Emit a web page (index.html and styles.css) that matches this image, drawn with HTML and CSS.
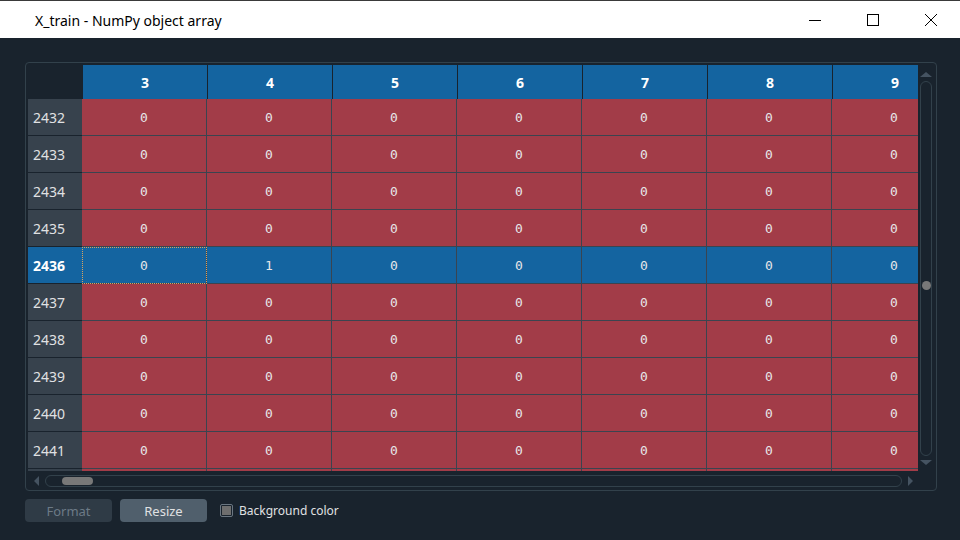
FILE: index.html
```html
<!DOCTYPE html>
<html>
<head>
<meta charset="utf-8">
<title>X_train - NumPy object array</title>
<link rel="stylesheet" href="styles.css">
</head>
<body>
<div class="titlebar">
  <div class="title">X_train - NumPy object array</div>
  <div class="controls">
    <div class="ctl"><svg width="14" height="14" viewBox="0 0 14 14"><path d="M1 7.5h12" stroke="#000" stroke-width="1" fill="none"/></svg></div>
    <div class="ctl"><svg width="14" height="14" viewBox="0 0 14 14"><rect x="1.5" y="1.5" width="11" height="11" stroke="#000" stroke-width="1" fill="none"/></svg></div>
    <div class="ctl"><svg width="14" height="14" viewBox="0 0 14 14"><path d="M1 1L13 13M13 1L1 13" stroke="#000" stroke-width="1" fill="none"/></svg></div>
  </div>
</div>
<div class="main">
  <div class="frame">
    <div class="viewport">
      <div class="hdr">
        <div class="corner"></div>
        <div class="hcell">3</div><div class="hcell">4</div><div class="hcell">5</div><div class="hcell">6</div><div class="hcell">7</div><div class="hcell">8</div><div class="hcell">9</div>
      </div>
      <div class="row"><div class="rh">2432</div><div class="cell">0</div><div class="cell">0</div><div class="cell">0</div><div class="cell">0</div><div class="cell">0</div><div class="cell">0</div><div class="cell">0</div></div>
      <div class="row"><div class="rh">2433</div><div class="cell">0</div><div class="cell">0</div><div class="cell">0</div><div class="cell">0</div><div class="cell">0</div><div class="cell">0</div><div class="cell">0</div></div>
      <div class="row"><div class="rh">2434</div><div class="cell">0</div><div class="cell">0</div><div class="cell">0</div><div class="cell">0</div><div class="cell">0</div><div class="cell">0</div><div class="cell">0</div></div>
      <div class="row"><div class="rh">2435</div><div class="cell">0</div><div class="cell">0</div><div class="cell">0</div><div class="cell">0</div><div class="cell">0</div><div class="cell">0</div><div class="cell">0</div></div>
      <div class="row sel"><div class="rh">2436</div><div class="cell focus">0</div><div class="cell">1</div><div class="cell">0</div><div class="cell">0</div><div class="cell">0</div><div class="cell">0</div><div class="cell">0</div></div>
      <div class="row"><div class="rh">2437</div><div class="cell">0</div><div class="cell">0</div><div class="cell">0</div><div class="cell">0</div><div class="cell">0</div><div class="cell">0</div><div class="cell">0</div></div>
      <div class="row"><div class="rh">2438</div><div class="cell">0</div><div class="cell">0</div><div class="cell">0</div><div class="cell">0</div><div class="cell">0</div><div class="cell">0</div><div class="cell">0</div></div>
      <div class="row"><div class="rh">2439</div><div class="cell">0</div><div class="cell">0</div><div class="cell">0</div><div class="cell">0</div><div class="cell">0</div><div class="cell">0</div><div class="cell">0</div></div>
      <div class="row"><div class="rh">2440</div><div class="cell">0</div><div class="cell">0</div><div class="cell">0</div><div class="cell">0</div><div class="cell">0</div><div class="cell">0</div><div class="cell">0</div></div>
      <div class="row"><div class="rh">2441</div><div class="cell">0</div><div class="cell">0</div><div class="cell">0</div><div class="cell">0</div><div class="cell">0</div><div class="cell">0</div><div class="cell">0</div></div>
      <div class="row"><div class="rh"></div><div class="cell"></div><div class="cell"></div><div class="cell"></div><div class="cell"></div><div class="cell"></div><div class="cell"></div><div class="cell"></div></div>
    </div>
    <div class="vscroll">
      <div class="arrow-up"></div>
      <div class="vtrack"><div class="vhandle"></div></div>
      <div class="arrow-down"></div>
    </div>
    <div class="hscroll">
      <div class="arrow-left"></div>
      <div class="htrack"><div class="hhandle"></div></div>
      <div class="arrow-right"></div>
    </div>
    <div class="scorner"></div>
  </div>
  <div class="bottombar">
    <div class="btn disabled">Format</div>
    <div class="btn">Resize</div>
    <div class="check"><div class="checkbox"><div class="checkfill"></div></div><span class="checklabel">Background color</span></div>
  </div>
</div>
</body>
</html>
```
FILE: styles.css
```css
html, body {
  margin: 0;
  padding: 0;
}
body {
  width: 960px;
  height: 540px;
  overflow: hidden;
  background: #19232d;
  font-family: "Noto Sans", "Open Sans", sans-serif;
  color: #e0e1e3;
}
.titlebar {
  height: 37px;
  background: #ffffff;
  border-top: 1px solid #3a3a3a;
  display: flex;
  align-items: center;
}
.title {
  margin-left: 35px;
  font-size: 14px;
  color: #000;
  margin-top: 1px;
}
.controls {
  margin-left: auto;
  display: flex;
  height: 37px;
}
.ctl {
  width: 58px;
  height: 37px;
  display: flex;
  align-items: center;
  justify-content: center;
}
.ctl svg {
  display: block;
}
.main {
  padding: 24px 0 0 25px;
}
.frame {
  width: 908px;
  height: 425px;
  padding: 2px 0 0 2px;
  border: 1px solid #32414b;
  border-radius: 4px;
  display: grid;
  grid-template-columns: 890px 18px;
  grid-template-rows: 406px 19px;
}
.viewport {
  overflow: hidden;
}
.hdr {
  display: flex;
  height: 34px;
}
.corner {
  flex: 0 0 54px;
  background: #19232d;
}
.hcell {
  flex: 0 0 125px;
  box-sizing: border-box;
  border-left: 1px solid #19232d;
  background: #1464a0;
  color: #ffffff;
  font-weight: bold;
  font-size: 14px;
  display: flex;
  align-items: center;
  justify-content: center;
}
.row {
  display: flex;
  height: 37px;
}
.rh {
  flex: 0 0 54px;
  box-sizing: border-box;
  background: #37424d;
  border-bottom: 1px solid #19232d;
  padding-left: 5px;
  padding-top: 1px;
  font-size: 14px;
  color: #e0e1e3;
  display: flex;
  align-items: center;
}
.cell {
  flex: 0 0 125px;
  box-sizing: border-box;
  background: #a23c48;
  border-right: 1px solid #3a4450;
  border-bottom: 1px solid #3a4450;
  font-family: "DejaVu Sans Mono", monospace;
  font-size: 13px;
  color: #e6e6e8;
  display: flex;
  align-items: center;
  justify-content: center;
}
.sel .rh {
  background: #1464a0;
  font-weight: bold;
  color: #ffffff;
}
.sel .cell {
  background: #1464a0;
}
.cell.focus {
  outline: 1px dotted #d9a35e;
  outline-offset: -1px;
}
.vscroll {
  display: flex;
  flex-direction: column;
  align-items: center;
  padding-right: 2px;
}
.arrow-up {
  margin-top: 7px;
  width: 0;
  height: 0;
  border-left: 6px solid transparent;
  border-right: 6px solid transparent;
  border-bottom: 5px solid #455361;
}
.vtrack {
  margin-top: 4px;
  width: 10px;
  height: 373px;
  border: 1px solid #32414b;
  border-radius: 6px;
  display: flex;
  flex-direction: column;
  align-items: center;
}
.vhandle {
  margin-top: 199px;
  width: 9px;
  height: 9px;
  border-radius: 50%;
  background: #787878;
}
.arrow-down {
  margin-top: 4px;
  width: 0;
  height: 0;
  border-left: 6px solid transparent;
  border-right: 6px solid transparent;
  border-top: 5px solid #455361;
}
.hscroll {
  display: flex;
  align-items: center;
}
.arrow-left {
  margin-left: 6px;
  width: 0;
  height: 0;
  border-top: 5px solid transparent;
  border-bottom: 5px solid transparent;
  border-right: 5px solid #455361;
}
.htrack {
  margin-left: 6px;
  width: 855px;
  height: 10px;
  border: 1px solid #32414b;
  border-radius: 6px;
  display: flex;
  align-items: center;
}
.hhandle {
  margin-left: 16px;
  width: 31px;
  height: 8px;
  border-radius: 4px;
  background: #787878;
}
.arrow-right {
  margin-left: 6px;
  width: 0;
  height: 0;
  border-top: 5px solid transparent;
  border-bottom: 5px solid transparent;
  border-left: 5px solid #455361;
}
.bottombar {
  margin-top: 8px;
  display: flex;
  align-items: center;
  height: 23px;
}
.btn {
  width: 87px;
  height: 23px;
  border-radius: 4px;
  background: #505f6c;
  color: #e0e1e3;
  font-size: 13px;
  display: flex;
  align-items: center;
  justify-content: center;
  margin-right: 8px;
}
.btn.disabled {
  background: #2f3b46;
  color: #6c7a86;
}
.check {
  display: flex;
  align-items: center;
  margin-left: 5px;
}
.checkbox {
  width: 11px;
  height: 11px;
  border: 1px solid #6a7681;
  border-radius: 2px;
  display: flex;
  align-items: center;
  justify-content: center;
}
.checkfill {
  width: 9px;
  height: 9px;
  background: #6e6e6e;
}
.checklabel {
  margin-left: 6px;
  font-size: 12px;
  color: #e0e1e3;
}
```
